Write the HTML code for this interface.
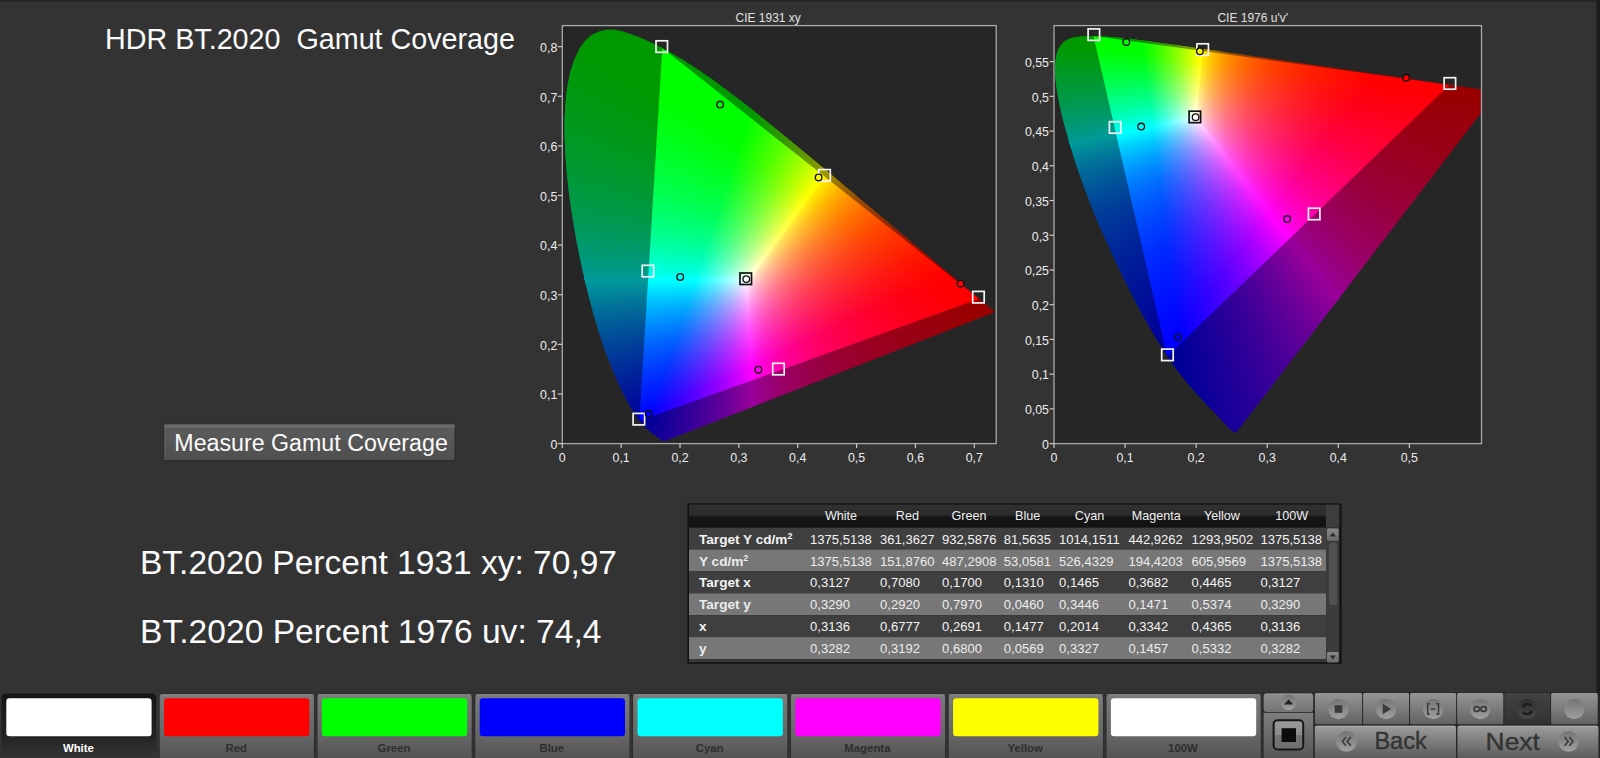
<!DOCTYPE html>
<html><head><meta charset="utf-8"><title>HDR BT.2020 Gamut Coverage</title>
<style>
html,body{margin:0;padding:0}
body{width:1600px;height:758px;background:#333;position:relative;overflow:hidden;font-family:"Liberation Sans",sans-serif}
.gam{position:absolute;overflow:hidden}
.ly{position:absolute;left:0;top:0;width:100%;height:100%}
.pb{position:absolute;background:#262626}
.pc{position:absolute;overflow:hidden}
#ov{position:absolute;left:0;top:0}
#ov text{font-family:"Liberation Sans",sans-serif;white-space:pre}
.topline{position:absolute;left:0;top:0;width:1600px;height:1.5px;background:#262626}
</style></head><body>

<div class="topline"></div>
<div class="pb" style="left:562.3px;top:25.6px;width:433.9px;height:418px"></div>
<div class="pb" style="left:1054px;top:25.6px;width:427.5px;height:418px"></div>
<div class="gam" style="left:562.3px;top:25.6px;width:433.9px;height:418px;clip-path:polygon(102.48px 415.52px,100.89px 415.47px,100.72px 415.39px,100.49px 415.27px,100.24px 415.12px,99.99px 414.97px,99.72px 414.79px,99.41px 414.58px,99.06px 414.33px,98.66px 414.05px,98.24px 413.73px,97.79px 413.39px,97.30px 413.00px,96.77px 412.59px,96.18px 412.15px,95.54px 411.68px,94.82px 411.15px,94.02px 410.56px,93.13px 409.92px,92.17px 409.22px,91.15px 408.47px,90.06px 407.66px,88.88px 406.74px,87.60px 405.71px,86.23px 404.58px,84.76px 403.26px,83.22px 401.83px,81.58px 400.23px,79.76px 398.20px,77.71px 395.73px,75.48px 392.83px,73.05px 389.32px,70.42px 385.24px,67.59px 380.55px,64.51px 374.93px,61.18px 368.37px,57.60px 360.87px,53.74px 352.15px,49.51px 342.20px,45.00px 331.03px,40.44px 318.41px,35.87px 304.21px,31.25px 288.56px,26.72px 271.62px,22.22px 253.16px,17.81px 233.41px,13.83px 213.22px,10.30px 192.55px,7.20px 171.44px,4.83px 150.85px,3.19px 130.87px,2.28px 111.40px,2.30px 93.09px,3.31px 75.92px,5.25px 59.91px,8.18px 45.75px,12.21px 33.56px,17.21px 23.22px,22.90px 15.09px,29.29px 9.47px,36.36px 6.06px,43.73px 4.27px,51.35px 4.21px,59.27px 5.78px,67.22px 8.04px,75.19px 10.86px,83.20px 14.37px,91.06px 18.11px,98.68px 21.93px,106.16px 25.97px,113.54px 30.17px,120.82px 34.53px,128.00px 39.05px,135.14px 43.72px,142.28px 48.54px,149.38px 53.52px,156.45px 58.60px,163.49px 63.80px,170.51px 69.10px,177.52px 74.48px,184.53px 79.94px,191.53px 85.47px,198.53px 91.05px,205.56px 96.70px,212.59px 102.40px,219.61px 108.12px,226.60px 113.88px,233.59px 119.66px,240.56px 125.44px,247.53px 131.22px,254.49px 137.00px,261.40px 142.76px,268.26px 148.50px,275.07px 154.21px,281.82px 159.88px,288.51px 165.49px,295.13px 171.06px,301.66px 176.55px,308.10px 181.96px,314.45px 187.30px,320.67px 192.53px,326.78px 197.64px,332.76px 202.65px,338.56px 207.51px,344.19px 212.25px,349.65px 216.86px,354.87px 221.26px,359.82px 225.42px,364.53px 229.37px,369.05px 233.17px,373.42px 236.83px,377.59px 240.33px,381.53px 243.64px,385.21px 246.71px,388.66px 249.57px,391.89px 252.27px,394.90px 254.80px,397.70px 257.16px,400.31px 259.36px,402.72px 261.40px,404.94px 263.28px,407.02px 265.02px,408.94px 266.63px,410.72px 268.11px,412.37px 269.49px,413.91px 270.78px,415.33px 271.98px,416.67px 273.11px,417.94px 274.18px,419.14px 275.19px,420.26px 276.14px,421.31px 277.02px,422.29px 277.85px,423.20px 278.62px,424.05px 279.32px,424.84px 279.96px,425.56px 280.55px,426.21px 281.09px,426.79px 281.59px,427.32px 282.04px,427.82px 282.46px,428.27px 282.84px,428.68px 283.18px,429.05px 283.50px,429.38px 283.78px,429.68px 284.03px,429.92px 284.23px,430.13px 284.41px,430.33px 284.57px,430.52px 284.73px,430.69px 284.88px,430.86px 285.02px,431.00px 285.14px,431.13px 285.25px,431.27px 285.37px,431.41px 285.48px,431.55px 285.60px,431.68px 285.71px,431.81px 285.82px,431.93px 285.92px,432.03px 286.01px,432.12px 286.09px,432.20px 286.15px,432.27px 286.21px,432.32px 286.25px,432.36px 286.28px,432.39px 286.31px,432.41px 286.33px,432.43px 286.35px,432.44px 286.36px)">
<div class="ly">
<div class="ly" style="background-image:conic-gradient(from 0deg at 88.29px 388.23px,#ffff00 0deg,#ffff00 35.5deg,#fffd00 35.75deg,#ffe300 37deg,#ffc900 38.5deg,#ffae00 40.25deg,#ff9400 42.25deg,#ff7b00 44.5deg,#ff6200 47.25deg,#ff4900 50.5deg,#ff3200 54.25deg,#ff1a00 58.75deg,#ff0300 64.25deg,#ff0000 65.25deg,#ff0000 125.25deg,#ff0000 185.25deg,#ff0000 245.25deg,#ff0000 305.25deg,#ff0000 360deg),conic-gradient(from 0deg at 176.58px 120.28px,#000000 0deg,#000000 60deg,#000000 120deg,#000000 124deg,#00001c 136deg,#000034 144.75deg,#00004a 151.5deg,#000061 157deg,#000077 161.5deg,#00008e 165.25deg,#0000a5 168.5deg,#0000bd 171.25deg,#0000d7 173.75deg,#0000f0 175.75deg,#0000fe 176.75deg,#0000ff 177.25deg,#0000ff 237.25deg,#0000ff 297.25deg,#0000ff 357.25deg,#0000ff 360deg);background-blend-mode:screen,normal;clip-path:polygon(181.17px 253.91px,702.90px -479.44px,901.18px -286.08px,1031.29px -41.57px,1080.88px 230.91px,1045.27px 505.58px,927.83px 756.41px,739.68px 959.65px,498.64px 1096.06px,227.53px 1152.72px)"></div>
<div class="ly" style="background-image:conic-gradient(from 0deg at 88.29px 388.23px,#00ff00 0deg,#00ff00 18.25deg,#25ff00 21.75deg,#49ff00 24.75deg,#6eff00 27.5deg,#94ff00 30deg,#bbff00 32.25deg,#e1ff00 34.25deg,#fcff00 35.5deg,#ffff00 35.75deg,#ffff00 95.75deg,#ffff00 155.75deg,#ffff00 215.75deg,#ffff00 245deg,#00ff00 245.25deg,#00ff00 305.25deg,#00ff00 360deg),conic-gradient(from 0deg at 376.70px 254.25px,#000000 0deg,#000000 60deg,#000000 120deg,#000000 180deg,#000000 240deg,#000000 245deg,#0000ff 245.25deg,#0000ff 269.75deg,#0000fd 270deg,#0000df 272deg,#0000c2 274.25deg,#0000a6 276.75deg,#000089 279.75deg,#00006d 283.25deg,#000051 287.25deg,#000036 292deg,#000019 297.75deg,#000000 303.75deg,#000000 360deg);background-blend-mode:screen,normal;clip-path:polygon(185.43px 257.42px,-714.55px 263.34px,-682.23px 18.32px,-584.49px -208.66px,-428.69px -400.50px,-226.59px -542.74px,6.59px -624.63px,253.24px -640.02px,494.78px -587.74px,713.00px -471.74px)"></div>
<div class="ly" style="background-image:conic-gradient(from 0deg at 176.58px 120.28px,#ff00ff 0deg,#ff00ff 60deg,#ff00ff 120deg,#ff00ff 176.75deg,#f900ff 177.25deg,#c500ff 181deg,#8f00ff 185.25deg,#5700ff 190deg,#1900ff 195.75deg,#0000ff 198.25deg,#0000ff 258.25deg,#0000ff 318.25deg,#0000ff 360deg),conic-gradient(from 0deg at 376.70px 254.25px,#000000 0deg,#000000 60deg,#000000 120deg,#000000 180deg,#000000 240deg,#000000 245deg,#001500 248deg,#003a00 252.75deg,#005e00 256.75deg,#008100 260.25deg,#00a600 263.5deg,#00c900 266.25deg,#00ee00 268.75deg,#00fd00 269.75deg,#00ff00 270deg,#00ff00 330deg,#00ff00 360deg);background-blend-mode:screen,normal;clip-path:polygon(186.11px 252.57px,239.66px 1150.97px,56.57px 1143.20px,-121.15px 1098.49px,-286.13px 1018.72px,-431.53px 907.18px,-551.32px 768.51px,-640.54px 608.44px,-695.49px 433.61px,-713.89px 251.29px)"></div>
</div>
<div class="ly" style="background:rgba(0,0,0,0.4);clip-path:polygon(evenodd,-50px -50px,483.9px -50px,483.9px 468px,-50px 468px,-50px -50px,416.73px 273.11px,100.06px 22.53px,77.11px 395.17px,416.73px 273.11px)"></div>
</div>
<div class="gam" style="left:1054px;top:25.6px;width:427.5px;height:418px;clip-path:polygon(182.51px 406.48px,179.24px 406.27px,178.79px 405.90px,178.13px 405.36px,177.40px 404.72px,176.66px 404.02px,175.85px 403.23px,174.92px 402.29px,173.84px 401.19px,172.63px 399.96px,171.32px 398.59px,169.93px 397.09px,168.43px 395.45px,166.79px 393.69px,165.04px 391.83px,163.16px 389.85px,161.07px 387.66px,158.75px 385.25px,156.24px 382.65px,153.55px 379.84px,150.73px 376.89px,147.75px 373.75px,144.51px 370.23px,141.05px 366.39px,137.37px 362.22px,133.41px 357.50px,129.31px 352.49px,124.99px 347.00px,120.08px 340.25px,114.62px 332.32px,108.75px 323.42px,102.39px 313.14px,95.72px 301.86px,88.80px 289.67px,81.51px 276.06px,74.01px 261.40px,66.46px 246.08px,58.86px 229.91px,51.26px 213.32px,43.90px 196.70px,37.05px 180.00px,30.77px 163.41px,25.05px 147.34px,20.01px 132.09px,15.53px 117.54px,11.62px 103.93px,8.45px 91.69px,5.91px 80.60px,3.89px 70.52px,2.47px 61.68px,1.55px 53.87px,1.06px 46.89px,1.02px 40.77px,1.42px 35.36px,2.18px 30.55px,3.30px 26.41px,4.81px 22.86px,6.66px 19.81px,8.73px 17.30px,11.07px 15.34px,13.68px 13.82px,16.43px 12.64px,19.33px 11.81px,22.42px 11.30px,25.59px 10.92px,28.84px 10.66px,32.20px 10.55px,35.58px 10.50px,38.93px 10.49px,42.30px 10.55px,45.72px 10.66px,49.19px 10.82px,52.70px 11.03px,56.30px 11.29px,60.01px 11.59px,63.81px 11.94px,67.71px 12.33px,71.72px 12.77px,75.84px 13.24px,80.10px 13.75px,84.49px 14.30px,89.02px 14.88px,93.71px 15.50px,98.57px 16.15px,103.61px 16.84px,108.81px 17.56px,114.18px 18.31px,119.75px 19.10px,125.50px 19.93px,131.46px 20.78px,137.62px 21.66px,143.98px 22.58px,150.55px 23.53px,157.32px 24.52px,164.29px 25.53px,171.47px 26.58px,178.87px 27.66px,186.45px 28.77px,194.23px 29.91px,202.20px 31.08px,210.34px 32.27px,218.63px 33.47px,227.08px 34.70px,235.62px 35.94px,244.24px 37.21px,252.94px 38.49px,261.58px 39.76px,270.07px 41.00px,278.44px 42.22px,286.75px 43.43px,295.05px 44.65px,303.26px 45.84px,311.25px 47.01px,318.92px 48.12px,326.31px 49.19px,333.44px 50.22px,340.29px 51.22px,346.82px 52.18px,353.05px 53.10px,358.95px 53.96px,364.49px 54.78px,369.75px 55.54px,374.70px 56.26px,379.33px 56.93px,383.72px 57.57px,387.88px 58.18px,391.78px 58.75px,395.51px 59.30px,399.09px 59.82px,402.49px 60.32px,405.72px 60.80px,408.78px 61.25px,411.66px 61.67px,414.36px 62.06px,416.88px 62.42px,419.20px 62.75px,421.35px 63.06px,423.32px 63.35px,425.11px 63.61px,426.77px 63.86px,428.31px 64.08px,429.71px 64.29px,430.99px 64.48px,432.17px 64.65px,433.22px 64.80px,434.15px 64.94px,434.93px 65.05px,435.59px 65.15px,436.21px 65.24px,436.82px 65.33px,437.38px 65.41px,437.91px 65.49px,438.37px 65.56px,438.80px 65.62px,439.23px 65.68px,439.68px 65.75px,440.13px 65.81px,440.56px 65.88px,440.97px 65.94px,441.36px 65.99px,441.71px 66.05px,442.00px 66.09px,442.26px 66.13px,442.47px 66.16px,442.63px 66.18px,442.75px 66.20px,442.85px 66.21px,442.94px 66.23px,443.00px 66.24px,443.05px 66.24px)">
<div class="ly">
<div class="ly" style="background-image:conic-gradient(from 0deg at 124.68px 308.34px,#ffff00 0deg,#ffff00 4deg,#fffe00 4.25deg,#ffe400 5.25deg,#ffce00 6.25deg,#ffb600 7.5deg,#ff9e00 9deg,#ff8700 10.75deg,#ff7100 12.75deg,#ff5e00 15deg,#ff4a00 17.75deg,#ff3700 21.25deg,#ff2400 25.5deg,#ff1200 30.75deg,#ff0000 37.5deg,#ff0000 97.5deg,#ff0000 157.5deg,#ff0000 217.5deg,#ff0000 277.5deg,#ff0000 337.5deg,#ff0000 352.5deg,#ffff00 352.75deg,#ffff00 360deg),conic-gradient(from 0deg at 88.84px 27.34px,#000000 0deg,#000000 60deg,#000000 96.75deg,#000023 106.75deg,#000043 114.5deg,#000060 120.75deg,#00007d 126deg,#00009a 130.5deg,#0000b6 134.25deg,#0000d3 137.5deg,#0000ef 140.25deg,#0000fd 141.5deg,#0000ff 141.75deg,#0000ff 201.75deg,#0000ff 261.75deg,#0000ff 321.75deg,#0000ff 352.5deg,#000000 352.75deg,#000000 360deg);background-blend-mode:screen,normal;clip-path:polygon(137.73px 93.63px,200.39px -804.18px,463.59px -745.30px,697.53px -611.08px,881.20px -413.57px,998.09px -170.51px,1037.73px 96.27px,996.53px 362.81px,878.21px 605.18px,693.40px 801.61px)"></div>
<div class="ly" style="background-image:conic-gradient(from 0deg at 124.68px 308.34px,#92ff00 0deg,#c3ff00 2deg,#f2ff00 3.75deg,#ffff00 4.25deg,#ffff00 64.25deg,#ffff00 124.25deg,#ffff00 184.25deg,#ffff00 217.5deg,#00ff00 217.75deg,#00ff00 277.75deg,#00ff00 337.75deg,#00ff00 352.75deg,#2eff00 355.25deg,#5bff00 357.5deg,#8cff00 359.75deg,#92ff00 360deg),conic-gradient(from 0deg at 320.32px 54.85px,#000000 0deg,#000000 60deg,#000000 120deg,#000000 180deg,#000000 217.5deg,#0000ff 217.75deg,#0000ff 258deg,#0000fc 258.25deg,#0000d1 260.75deg,#0000a5 263.5deg,#00007a 266.5deg,#00004d 270deg,#00001e 274deg,#000000 276.75deg,#000000 336.75deg,#000000 360deg);background-blend-mode:screen,normal;clip-path:polygon(142.86px 94.73px,-737.03px 283.95px,-756.95px 76.09px,-728.44px -130.77px,-653.02px -325.49px,-534.76px -497.59px,-380.03px -637.80px,-197.14px -738.58px,4.04px -794.50px,212.70px -802.56px)"></div>
<div class="ly" style="background-image:conic-gradient(from 0deg at 88.84px 27.34px,#ff00ff 0deg,#ff00ff 60deg,#ff00ff 120deg,#ff00ff 141.5deg,#fe00ff 141.75deg,#d700ff 145.25deg,#af00ff 149.25deg,#8700ff 153.75deg,#5d00ff 159deg,#3100ff 165.25deg,#0000ff 172.75deg,#0000ff 232.75deg,#0000ff 292.75deg,#0000ff 352.75deg,#0000ff 360deg),conic-gradient(from 0deg at 320.32px 54.85px,#000000 0deg,#000000 60deg,#000000 120deg,#000000 180deg,#000000 217.75deg,#001800 226deg,#002e00 232.5deg,#004500 237.75deg,#005b00 242deg,#007100 245.5deg,#008800 248.5deg,#00a200 251.25deg,#00bb00 253.5deg,#00d500 255.5deg,#00f000 257.25deg,#00fd00 258deg,#00ff00 258.25deg,#00ff00 318.25deg,#00ff00 360deg);background-blend-mode:screen,normal;clip-path:polygon(141.62px 89.93px,702.93px 793.44px,507.28px 912.30px,287.97px 977.95px,59.19px 986.15px,-164.25px 936.36px,-367.91px 831.81px,-538.60px 679.26px,-665.28px 488.58px,-739.75px 272.11px)"></div>
</div>
<div class="ly" style="background:rgba(0,0,0,0.4);clip-path:polygon(evenodd,-50px -50px,477.5px -50px,477.5px 468px,-50px 468px,-50px -50px,395.58px 59.28px,39.54px 10.47px,113.19px 330.61px,395.58px 59.28px)"></div>
</div>
<svg id="ov" width="1600" height="758" viewBox="0 0 1600 758"><defs>
<linearGradient id="gbtn" x1="0" y1="0" x2="0" y2="1"><stop offset="0" stop-color="#5c5c5c"/><stop offset="1" stop-color="#4f4f4f"/></linearGradient>
<linearGradient id="ghead" x1="0" y1="0" x2="0" y2="1"><stop offset="0" stop-color="#303030"/><stop offset="0.45" stop-color="#2c2c2c"/><stop offset="0.53" stop-color="#151515"/><stop offset="1" stop-color="#121212"/></linearGradient>
<linearGradient id="gsb" x1="0" y1="0" x2="0" y2="1"><stop offset="0" stop-color="#8a8a8a"/><stop offset="1" stop-color="#6a6a6a"/></linearGradient>
<linearGradient id="gsel" x1="0" y1="693" x2="0" y2="758" gradientUnits="userSpaceOnUse"><stop offset="0" stop-color="#161616"/><stop offset="0.6" stop-color="#202020"/><stop offset="1" stop-color="#343434"/></linearGradient>
<linearGradient id="gsw" x1="0" y1="694" x2="0" y2="758" gradientUnits="userSpaceOnUse"><stop offset="0" stop-color="#7c7c7c"/><stop offset="0.65" stop-color="#666"/><stop offset="1" stop-color="#545454"/></linearGradient>
<linearGradient id="gctl" x1="0" y1="0" x2="0" y2="1"><stop offset="0" stop-color="#959595"/><stop offset="1" stop-color="#626262"/></linearGradient>
<linearGradient id="gctl2" x1="0" y1="0" x2="0" y2="1"><stop offset="0" stop-color="#8e8e8e"/><stop offset="1" stop-color="#747474"/></linearGradient>
<linearGradient id="gctl3" x1="0" y1="713" x2="0" y2="758" gradientUnits="userSpaceOnUse"><stop offset="0" stop-color="#7e7e7e"/><stop offset="1" stop-color="#565656"/></linearGradient>
<linearGradient id="gctl4" x1="0" y1="726" x2="0" y2="758" gradientUnits="userSpaceOnUse"><stop offset="0" stop-color="#9c9c9c"/><stop offset="1" stop-color="#5c5c5c"/></linearGradient>
<linearGradient id="gdark" x1="0" y1="0" x2="0" y2="1"><stop offset="0" stop-color="#424242"/><stop offset="1" stop-color="#323232"/></linearGradient>
<linearGradient id="gcirc" x1="0" y1="0" x2="0" y2="1"><stop offset="0" stop-color="#747474"/><stop offset="1" stop-color="#a0a0a0"/></linearGradient>
<linearGradient id="gcircd" x1="0" y1="0" x2="0" y2="1"><stop offset="0" stop-color="#2e2e2e"/><stop offset="1" stop-color="#484848"/></linearGradient>
<linearGradient id="gcirc2" x1="0" y1="0" x2="0" y2="1"><stop offset="0" stop-color="#9a9a9a"/><stop offset="0.5" stop-color="#8c8c8c"/><stop offset="0.5" stop-color="#747474"/><stop offset="1" stop-color="#6e6e6e"/></linearGradient>
<clipPath id="clipxy"><rect x="554.3" y="17.6" width="449.9" height="434"/></clipPath>
<clipPath id="clipuv"><rect x="1046" y="17.6" width="436.1" height="434"/></clipPath>
</defs>
<text x="105" y="49" font-size="28.8" fill="#fbfbfb" text-anchor="start" font-weight="normal" textLength="410" lengthAdjust="spacingAndGlyphs">HDR BT.2020&#160; Gamut Coverage</text>
<text x="140" y="573.6" font-size="33.5" fill="#fbfbfb" text-anchor="start" font-weight="normal" textLength="477" lengthAdjust="spacingAndGlyphs">BT.2020 Percent 1931 xy: 70,97</text>
<text x="140" y="643" font-size="33.5" fill="#fbfbfb" text-anchor="start" font-weight="normal" textLength="461.5" lengthAdjust="spacingAndGlyphs">BT.2020 Percent 1976 uv: 74,4</text>
<rect x="163.5" y="423.5" width="292" height="37.5" rx="1.5" fill="#2a2a2a"/>
<rect x="164.5" y="424.5" width="290" height="35.5" fill="url(#gbtn)"/>
<rect x="164.5" y="424.5" width="290" height="3.2" fill="#6c6c6c"/>
<rect x="164.5" y="424.5" width="1" height="35.5" fill="#666"/>
<text x="174.3" y="451" font-size="23.3" fill="#fbfbfb" text-anchor="start" font-weight="normal" textLength="273.5" lengthAdjust="spacingAndGlyphs">Measure Gamut Coverage</text>
<rect x="562.3" y="25.6" width="433.9" height="418" fill="none" stroke="#a9a9a9" stroke-width="1.3"/>
<text x="768.2" y="21.6" font-size="12" fill="#e0e0e0" text-anchor="middle" font-weight="normal">CIE 1931 xy</text>
<line x1="562.3" y1="443.6" x2="562.3" y2="448.1" stroke="#c8c8c8" stroke-width="1.2"/>
<text x="562.3" y="461.7" font-size="12.4" fill="#ececec" text-anchor="middle" font-weight="normal">0</text>
<line x1="621.16" y1="443.6" x2="621.16" y2="448.1" stroke="#c8c8c8" stroke-width="1.2"/>
<text x="621.16" y="461.7" font-size="12.4" fill="#ececec" text-anchor="middle" font-weight="normal">0,1</text>
<line x1="680.02" y1="443.6" x2="680.02" y2="448.1" stroke="#c8c8c8" stroke-width="1.2"/>
<text x="680.02" y="461.7" font-size="12.4" fill="#ececec" text-anchor="middle" font-weight="normal">0,2</text>
<line x1="738.88" y1="443.6" x2="738.88" y2="448.1" stroke="#c8c8c8" stroke-width="1.2"/>
<text x="738.88" y="461.7" font-size="12.4" fill="#ececec" text-anchor="middle" font-weight="normal">0,3</text>
<line x1="797.74" y1="443.6" x2="797.74" y2="448.1" stroke="#c8c8c8" stroke-width="1.2"/>
<text x="797.74" y="461.7" font-size="12.4" fill="#ececec" text-anchor="middle" font-weight="normal">0,4</text>
<line x1="856.6" y1="443.6" x2="856.6" y2="448.1" stroke="#c8c8c8" stroke-width="1.2"/>
<text x="856.6" y="461.7" font-size="12.4" fill="#ececec" text-anchor="middle" font-weight="normal">0,5</text>
<line x1="915.46" y1="443.6" x2="915.46" y2="448.1" stroke="#c8c8c8" stroke-width="1.2"/>
<text x="915.46" y="461.7" font-size="12.4" fill="#ececec" text-anchor="middle" font-weight="normal">0,6</text>
<line x1="974.32" y1="443.6" x2="974.32" y2="448.1" stroke="#c8c8c8" stroke-width="1.2"/>
<text x="974.32" y="461.7" font-size="12.4" fill="#ececec" text-anchor="middle" font-weight="normal">0,7</text>
<line x1="557.8" y1="443.6" x2="562.3" y2="443.6" stroke="#c8c8c8" stroke-width="1.2"/>
<text x="557.3" y="448.9" font-size="12.4" fill="#ececec" text-anchor="end" font-weight="normal">0</text>
<line x1="557.8" y1="393.98" x2="562.3" y2="393.98" stroke="#c8c8c8" stroke-width="1.2"/>
<text x="557.3" y="399.28" font-size="12.4" fill="#ececec" text-anchor="end" font-weight="normal">0,1</text>
<line x1="557.8" y1="344.36" x2="562.3" y2="344.36" stroke="#c8c8c8" stroke-width="1.2"/>
<text x="557.3" y="349.66" font-size="12.4" fill="#ececec" text-anchor="end" font-weight="normal">0,2</text>
<line x1="557.8" y1="294.74" x2="562.3" y2="294.74" stroke="#c8c8c8" stroke-width="1.2"/>
<text x="557.3" y="300.04" font-size="12.4" fill="#ececec" text-anchor="end" font-weight="normal">0,3</text>
<line x1="557.8" y1="245.12" x2="562.3" y2="245.12" stroke="#c8c8c8" stroke-width="1.2"/>
<text x="557.3" y="250.42" font-size="12.4" fill="#ececec" text-anchor="end" font-weight="normal">0,4</text>
<line x1="557.8" y1="195.5" x2="562.3" y2="195.5" stroke="#c8c8c8" stroke-width="1.2"/>
<text x="557.3" y="200.8" font-size="12.4" fill="#ececec" text-anchor="end" font-weight="normal">0,5</text>
<line x1="557.8" y1="145.88" x2="562.3" y2="145.88" stroke="#c8c8c8" stroke-width="1.2"/>
<text x="557.3" y="151.18" font-size="12.4" fill="#ececec" text-anchor="end" font-weight="normal">0,6</text>
<line x1="557.8" y1="96.26" x2="562.3" y2="96.26" stroke="#c8c8c8" stroke-width="1.2"/>
<text x="557.3" y="101.56" font-size="12.4" fill="#ececec" text-anchor="end" font-weight="normal">0,7</text>
<line x1="557.8" y1="46.64" x2="562.3" y2="46.64" stroke="#c8c8c8" stroke-width="1.2"/>
<text x="557.3" y="51.94" font-size="12.4" fill="#ececec" text-anchor="end" font-weight="normal">0,8</text>
<rect x="1054" y="25.6" width="427.5" height="418" fill="none" stroke="#a9a9a9" stroke-width="1.3"/>
<text x="1252.7" y="21.6" font-size="12" fill="#e0e0e0" text-anchor="middle" font-weight="normal">CIE 1976 u'v'</text>
<line x1="1054" y1="443.6" x2="1054" y2="448.1" stroke="#c8c8c8" stroke-width="1.2"/>
<text x="1054" y="461.7" font-size="12.4" fill="#ececec" text-anchor="middle" font-weight="normal">0</text>
<line x1="1125.07" y1="443.6" x2="1125.07" y2="448.1" stroke="#c8c8c8" stroke-width="1.2"/>
<text x="1125.07" y="461.7" font-size="12.4" fill="#ececec" text-anchor="middle" font-weight="normal">0,1</text>
<line x1="1196.14" y1="443.6" x2="1196.14" y2="448.1" stroke="#c8c8c8" stroke-width="1.2"/>
<text x="1196.14" y="461.7" font-size="12.4" fill="#ececec" text-anchor="middle" font-weight="normal">0,2</text>
<line x1="1267.21" y1="443.6" x2="1267.21" y2="448.1" stroke="#c8c8c8" stroke-width="1.2"/>
<text x="1267.21" y="461.7" font-size="12.4" fill="#ececec" text-anchor="middle" font-weight="normal">0,3</text>
<line x1="1338.28" y1="443.6" x2="1338.28" y2="448.1" stroke="#c8c8c8" stroke-width="1.2"/>
<text x="1338.28" y="461.7" font-size="12.4" fill="#ececec" text-anchor="middle" font-weight="normal">0,4</text>
<line x1="1409.35" y1="443.6" x2="1409.35" y2="448.1" stroke="#c8c8c8" stroke-width="1.2"/>
<text x="1409.35" y="461.7" font-size="12.4" fill="#ececec" text-anchor="middle" font-weight="normal">0,5</text>
<line x1="1049.5" y1="443.6" x2="1054" y2="443.6" stroke="#c8c8c8" stroke-width="1.2"/>
<text x="1049" y="448.9" font-size="12.4" fill="#ececec" text-anchor="end" font-weight="normal">0</text>
<line x1="1049.5" y1="408.875" x2="1054" y2="408.875" stroke="#c8c8c8" stroke-width="1.2"/>
<text x="1049" y="414.175" font-size="12.4" fill="#ececec" text-anchor="end" font-weight="normal">0,05</text>
<line x1="1049.5" y1="374.15" x2="1054" y2="374.15" stroke="#c8c8c8" stroke-width="1.2"/>
<text x="1049" y="379.45" font-size="12.4" fill="#ececec" text-anchor="end" font-weight="normal">0,1</text>
<line x1="1049.5" y1="339.425" x2="1054" y2="339.425" stroke="#c8c8c8" stroke-width="1.2"/>
<text x="1049" y="344.725" font-size="12.4" fill="#ececec" text-anchor="end" font-weight="normal">0,15</text>
<line x1="1049.5" y1="304.7" x2="1054" y2="304.7" stroke="#c8c8c8" stroke-width="1.2"/>
<text x="1049" y="310" font-size="12.4" fill="#ececec" text-anchor="end" font-weight="normal">0,2</text>
<line x1="1049.5" y1="269.975" x2="1054" y2="269.975" stroke="#c8c8c8" stroke-width="1.2"/>
<text x="1049" y="275.275" font-size="12.4" fill="#ececec" text-anchor="end" font-weight="normal">0,25</text>
<line x1="1049.5" y1="235.25" x2="1054" y2="235.25" stroke="#c8c8c8" stroke-width="1.2"/>
<text x="1049" y="240.55" font-size="12.4" fill="#ececec" text-anchor="end" font-weight="normal">0,3</text>
<line x1="1049.5" y1="200.525" x2="1054" y2="200.525" stroke="#c8c8c8" stroke-width="1.2"/>
<text x="1049" y="205.825" font-size="12.4" fill="#ececec" text-anchor="end" font-weight="normal">0,35</text>
<line x1="1049.5" y1="165.8" x2="1054" y2="165.8" stroke="#c8c8c8" stroke-width="1.2"/>
<text x="1049" y="171.1" font-size="12.4" fill="#ececec" text-anchor="end" font-weight="normal">0,4</text>
<line x1="1049.5" y1="131.075" x2="1054" y2="131.075" stroke="#c8c8c8" stroke-width="1.2"/>
<text x="1049" y="136.375" font-size="12.4" fill="#ececec" text-anchor="end" font-weight="normal">0,45</text>
<line x1="1049.5" y1="96.35" x2="1054" y2="96.35" stroke="#c8c8c8" stroke-width="1.2"/>
<text x="1049" y="101.65" font-size="12.4" fill="#ececec" text-anchor="end" font-weight="normal">0,5</text>
<line x1="1049.5" y1="61.625" x2="1054" y2="61.625" stroke="#c8c8c8" stroke-width="1.2"/>
<text x="1049" y="66.925" font-size="12.4" fill="#ececec" text-anchor="end" font-weight="normal">0,55</text>
<g clip-path="url(#clipxy)">
<rect x="740.0" y="273.0" width="11.5" height="11.5" fill="none" stroke="#111" stroke-width="1.7"/>
<rect x="972.7" y="291.4" width="11.5" height="11.5" fill="none" stroke="#f4f4f4" stroke-width="1.7"/>
<rect x="656.0" y="40.8" width="11.5" height="11.5" fill="none" stroke="#f4f4f4" stroke-width="1.7"/>
<rect x="633.1" y="413.4" width="11.5" height="11.5" fill="none" stroke="#f4f4f4" stroke-width="1.7"/>
<rect x="642.2" y="265.3" width="11.5" height="11.5" fill="none" stroke="#f4f4f4" stroke-width="1.7"/>
<rect x="772.7" y="363.3" width="11.5" height="11.5" fill="none" stroke="#f4f4f4" stroke-width="1.7"/>
<rect x="818.8" y="169.6" width="11.5" height="11.5" fill="none" stroke="#f4f4f4" stroke-width="1.7"/>
<circle cx="746.3" cy="279.1" r="3.3" fill="#ffffff" stroke="#121212" stroke-width="1.35"/>
<circle cx="960.6" cy="283.6" r="3.3" fill="#ff0000" stroke="#121212" stroke-width="1.35"/>
<circle cx="720.1" cy="104.6" r="3.3" fill="#00ff00" stroke="#121212" stroke-width="1.35"/>
<circle cx="648.6" cy="413.8" r="3.3" fill="#0000ff" stroke="#121212" stroke-width="1.35"/>
<circle cx="680.2" cy="276.9" r="3.3" fill="#00ffff" stroke="#121212" stroke-width="1.35"/>
<circle cx="758.4" cy="369.7" r="3.3" fill="#ff00ff" stroke="#121212" stroke-width="1.35"/>
<circle cx="818.6" cy="177.4" r="3.3" fill="#ffff00" stroke="#121212" stroke-width="1.35"/>
</g>
<g clip-path="url(#clipuv)">
<rect x="1189.1" y="111.2" width="11.5" height="11.5" fill="none" stroke="#111" stroke-width="1.7"/>
<rect x="1444.1" y="77.7" width="11.5" height="11.5" fill="none" stroke="#f4f4f4" stroke-width="1.7"/>
<rect x="1088.1" y="28.9" width="11.5" height="11.5" fill="none" stroke="#f4f4f4" stroke-width="1.7"/>
<rect x="1161.7" y="349.1" width="11.5" height="11.5" fill="none" stroke="#f4f4f4" stroke-width="1.7"/>
<rect x="1109.4" y="121.7" width="11.5" height="11.5" fill="none" stroke="#f4f4f4" stroke-width="1.7"/>
<rect x="1308.4" y="208.2" width="11.5" height="11.5" fill="none" stroke="#f4f4f4" stroke-width="1.7"/>
<rect x="1196.9" y="43.8" width="11.5" height="11.5" fill="none" stroke="#f4f4f4" stroke-width="1.7"/>
<circle cx="1195.6" cy="117.2" r="3.3" fill="#ffffff" stroke="#121212" stroke-width="1.35"/>
<circle cx="1406.2" cy="77.8" r="3.3" fill="#ff0000" stroke="#121212" stroke-width="1.35"/>
<circle cx="1126.3" cy="42.0" r="3.3" fill="#00ff00" stroke="#121212" stroke-width="1.35"/>
<circle cx="1178.3" cy="337.2" r="3.3" fill="#0000ff" stroke="#121212" stroke-width="1.35"/>
<circle cx="1141.2" cy="126.6" r="3.3" fill="#00ffff" stroke="#121212" stroke-width="1.35"/>
<circle cx="1287.2" cy="219.0" r="3.3" fill="#ff00ff" stroke="#121212" stroke-width="1.35"/>
<circle cx="1199.9" cy="51.3" r="3.3" fill="#ffff00" stroke="#121212" stroke-width="1.35"/>
</g>
<rect x="687.4" y="503.4" width="654.2" height="160.4" fill="#121212"/>
<rect x="689" y="504.6" width="637" height="23" fill="url(#ghead)"/>
<rect x="1326" y="504.6" width="13.4" height="23" fill="#3d3d3d"/>
<rect x="689" y="527.6" width="637" height="21.9" fill="#3f3f3f"/>
<rect x="689" y="549.5" width="637" height="21.9" fill="#777777"/>
<rect x="689" y="571.4" width="637" height="21.9" fill="#3f3f3f"/>
<rect x="689" y="593.3" width="637" height="21.9" fill="#777777"/>
<rect x="689" y="615.2" width="637" height="21.9" fill="#3f3f3f"/>
<rect x="689" y="637.1" width="637" height="22.1" fill="#777777"/>
<rect x="689" y="659.2" width="637" height="3" fill="#3a3a3a"/>
<rect x="1326" y="527.6" width="13.4" height="134.6" fill="#3b3b3b"/>
<rect x="1327" y="528.4" width="11.6" height="12.4" rx="1.5" fill="url(#gsb)"/>
<path d="M1329.6 536.6 L1332.8 532.6 L1336 536.6 Z" fill="#2c2c2c"/>
<rect x="1328.8" y="542.6" width="8.4" height="62.6" rx="3.5" fill="#505050"/>
<rect x="1327" y="652" width="11.6" height="10.6" rx="1.5" fill="url(#gsb)"/>
<path d="M1329.6 655.6 L1336 655.6 L1332.8 659.6 Z" fill="#2c2c2c"/>
<text x="841" y="519.6" font-size="12.6" fill="#f0f0f0" text-anchor="middle" font-weight="normal">White</text>
<text x="907.4" y="519.6" font-size="12.6" fill="#f0f0f0" text-anchor="middle" font-weight="normal">Red</text>
<text x="969" y="519.6" font-size="12.6" fill="#f0f0f0" text-anchor="middle" font-weight="normal">Green</text>
<text x="1027.6" y="519.6" font-size="12.6" fill="#f0f0f0" text-anchor="middle" font-weight="normal">Blue</text>
<text x="1089.5" y="519.6" font-size="12.6" fill="#f0f0f0" text-anchor="middle" font-weight="normal">Cyan</text>
<text x="1156.3" y="519.6" font-size="12.6" fill="#f0f0f0" text-anchor="middle" font-weight="normal">Magenta</text>
<text x="1222" y="519.6" font-size="12.6" fill="#f0f0f0" text-anchor="middle" font-weight="normal">Yellow</text>
<text x="1291.8" y="519.6" font-size="12.6" fill="#f0f0f0" text-anchor="middle" font-weight="normal">100W</text>
<text x="699" y="543.6" font-size="13.6" fill="#f4f4f4" text-anchor="start" font-weight="bold">Target Y cd/m<tspan font-size="9" dy="-5">2</tspan></text>
<text x="810" y="543.6" font-size="13.05" fill="#f4f4f4" text-anchor="start" font-weight="normal">1375,5138</text>
<text x="880" y="543.6" font-size="13.05" fill="#f4f4f4" text-anchor="start" font-weight="normal">361,3627</text>
<text x="942" y="543.6" font-size="13.05" fill="#f4f4f4" text-anchor="start" font-weight="normal">932,5876</text>
<text x="1003.8" y="543.6" font-size="13.05" fill="#f4f4f4" text-anchor="start" font-weight="normal">81,5635</text>
<text x="1059" y="543.6" font-size="13.05" fill="#f4f4f4" text-anchor="start" font-weight="normal">1014,1511</text>
<text x="1128.4" y="543.6" font-size="13.05" fill="#f4f4f4" text-anchor="start" font-weight="normal">442,9262</text>
<text x="1191.6" y="543.6" font-size="13.05" fill="#f4f4f4" text-anchor="start" font-weight="normal">1293,9502</text>
<text x="1260.4" y="543.6" font-size="13.05" fill="#f4f4f4" text-anchor="start" font-weight="normal">1375,5138</text>
<text x="699" y="565.5" font-size="13.6" fill="#ececec" text-anchor="start" font-weight="bold">Y cd/m<tspan font-size="9" dy="-5">2</tspan></text>
<text x="810" y="565.5" font-size="13.05" fill="#ececec" text-anchor="start" font-weight="normal">1375,5138</text>
<text x="880" y="565.5" font-size="13.05" fill="#ececec" text-anchor="start" font-weight="normal">151,8760</text>
<text x="942" y="565.5" font-size="13.05" fill="#ececec" text-anchor="start" font-weight="normal">487,2908</text>
<text x="1003.8" y="565.5" font-size="13.05" fill="#ececec" text-anchor="start" font-weight="normal">53,0581</text>
<text x="1059" y="565.5" font-size="13.05" fill="#ececec" text-anchor="start" font-weight="normal">526,4329</text>
<text x="1128.4" y="565.5" font-size="13.05" fill="#ececec" text-anchor="start" font-weight="normal">194,4203</text>
<text x="1191.6" y="565.5" font-size="13.05" fill="#ececec" text-anchor="start" font-weight="normal">605,9569</text>
<text x="1260.4" y="565.5" font-size="13.05" fill="#ececec" text-anchor="start" font-weight="normal">1375,5138</text>
<text x="699" y="587.4" font-size="13.6" fill="#f4f4f4" text-anchor="start" font-weight="bold">Target x</text>
<text x="810" y="587.4" font-size="13.05" fill="#f4f4f4" text-anchor="start" font-weight="normal">0,3127</text>
<text x="880" y="587.4" font-size="13.05" fill="#f4f4f4" text-anchor="start" font-weight="normal">0,7080</text>
<text x="942" y="587.4" font-size="13.05" fill="#f4f4f4" text-anchor="start" font-weight="normal">0,1700</text>
<text x="1003.8" y="587.4" font-size="13.05" fill="#f4f4f4" text-anchor="start" font-weight="normal">0,1310</text>
<text x="1059" y="587.4" font-size="13.05" fill="#f4f4f4" text-anchor="start" font-weight="normal">0,1465</text>
<text x="1128.4" y="587.4" font-size="13.05" fill="#f4f4f4" text-anchor="start" font-weight="normal">0,3682</text>
<text x="1191.6" y="587.4" font-size="13.05" fill="#f4f4f4" text-anchor="start" font-weight="normal">0,4465</text>
<text x="1260.4" y="587.4" font-size="13.05" fill="#f4f4f4" text-anchor="start" font-weight="normal">0,3127</text>
<text x="699" y="609.3" font-size="13.6" fill="#ececec" text-anchor="start" font-weight="bold">Target y</text>
<text x="810" y="609.3" font-size="13.05" fill="#ececec" text-anchor="start" font-weight="normal">0,3290</text>
<text x="880" y="609.3" font-size="13.05" fill="#ececec" text-anchor="start" font-weight="normal">0,2920</text>
<text x="942" y="609.3" font-size="13.05" fill="#ececec" text-anchor="start" font-weight="normal">0,7970</text>
<text x="1003.8" y="609.3" font-size="13.05" fill="#ececec" text-anchor="start" font-weight="normal">0,0460</text>
<text x="1059" y="609.3" font-size="13.05" fill="#ececec" text-anchor="start" font-weight="normal">0,3446</text>
<text x="1128.4" y="609.3" font-size="13.05" fill="#ececec" text-anchor="start" font-weight="normal">0,1471</text>
<text x="1191.6" y="609.3" font-size="13.05" fill="#ececec" text-anchor="start" font-weight="normal">0,5374</text>
<text x="1260.4" y="609.3" font-size="13.05" fill="#ececec" text-anchor="start" font-weight="normal">0,3290</text>
<text x="699" y="631.2" font-size="13.6" fill="#f4f4f4" text-anchor="start" font-weight="bold">x</text>
<text x="810" y="631.2" font-size="13.05" fill="#f4f4f4" text-anchor="start" font-weight="normal">0,3136</text>
<text x="880" y="631.2" font-size="13.05" fill="#f4f4f4" text-anchor="start" font-weight="normal">0,6777</text>
<text x="942" y="631.2" font-size="13.05" fill="#f4f4f4" text-anchor="start" font-weight="normal">0,2691</text>
<text x="1003.8" y="631.2" font-size="13.05" fill="#f4f4f4" text-anchor="start" font-weight="normal">0,1477</text>
<text x="1059" y="631.2" font-size="13.05" fill="#f4f4f4" text-anchor="start" font-weight="normal">0,2014</text>
<text x="1128.4" y="631.2" font-size="13.05" fill="#f4f4f4" text-anchor="start" font-weight="normal">0,3342</text>
<text x="1191.6" y="631.2" font-size="13.05" fill="#f4f4f4" text-anchor="start" font-weight="normal">0,4365</text>
<text x="1260.4" y="631.2" font-size="13.05" fill="#f4f4f4" text-anchor="start" font-weight="normal">0,3136</text>
<text x="699" y="653.1" font-size="13.6" fill="#ececec" text-anchor="start" font-weight="bold">y</text>
<text x="810" y="653.1" font-size="13.05" fill="#ececec" text-anchor="start" font-weight="normal">0,3282</text>
<text x="880" y="653.1" font-size="13.05" fill="#ececec" text-anchor="start" font-weight="normal">0,3192</text>
<text x="942" y="653.1" font-size="13.05" fill="#ececec" text-anchor="start" font-weight="normal">0,6800</text>
<text x="1003.8" y="653.1" font-size="13.05" fill="#ececec" text-anchor="start" font-weight="normal">0,0569</text>
<text x="1059" y="653.1" font-size="13.05" fill="#ececec" text-anchor="start" font-weight="normal">0,3327</text>
<text x="1128.4" y="653.1" font-size="13.05" fill="#ececec" text-anchor="start" font-weight="normal">0,1457</text>
<text x="1191.6" y="653.1" font-size="13.05" fill="#ececec" text-anchor="start" font-weight="normal">0,5332</text>
<text x="1260.4" y="653.1" font-size="13.05" fill="#ececec" text-anchor="start" font-weight="normal">0,3282</text>
<rect x="1595.6" y="0" width="1" height="758" fill="#2a2a2a"/><rect x="1596.6" y="0" width="3.4" height="758" fill="#1c1c1c"/>
<rect x="1.5" y="693.6" width="154.6" height="70" rx="4" fill="url(#gsel)"/>
<rect x="6.3" y="698.2" width="145.3" height="38" rx="3.2" fill="#ffffff"/>
<text x="78.4" y="752.2" font-size="11.4" fill="#ffffff" text-anchor="middle" font-weight="bold">White</text>
<rect x="158.9" y="693.4" width="155.6" height="70" rx="4" fill="#2b2b2b"/>
<rect x="159.7" y="694.2" width="154.2" height="70" rx="3.5" fill="url(#gsw)"/>
<rect x="159.7" y="694.2" width="154.2" height="1.4" rx="0.7" fill="#8c8c8c" opacity="0.8"/>
<rect x="164.1" y="698.2" width="145.3" height="38" rx="3.2" fill="#ff0000"/>
<text x="236.2" y="752.2" font-size="11.4" fill="#2e2e2e" text-anchor="middle" font-weight="bold">Red</text>
<rect x="316.7" y="693.4" width="155.6" height="70" rx="4" fill="#2b2b2b"/>
<rect x="317.5" y="694.2" width="154.2" height="70" rx="3.5" fill="url(#gsw)"/>
<rect x="317.5" y="694.2" width="154.2" height="1.4" rx="0.7" fill="#8c8c8c" opacity="0.8"/>
<rect x="321.9" y="698.2" width="145.3" height="38" rx="3.2" fill="#00ff00"/>
<text x="394" y="752.2" font-size="11.4" fill="#2e2e2e" text-anchor="middle" font-weight="bold">Green</text>
<rect x="474.5" y="693.4" width="155.6" height="70" rx="4" fill="#2b2b2b"/>
<rect x="475.3" y="694.2" width="154.2" height="70" rx="3.5" fill="url(#gsw)"/>
<rect x="475.3" y="694.2" width="154.2" height="1.4" rx="0.7" fill="#8c8c8c" opacity="0.8"/>
<rect x="479.7" y="698.2" width="145.3" height="38" rx="3.2" fill="#0000ff"/>
<text x="551.8" y="752.2" font-size="11.4" fill="#2e2e2e" text-anchor="middle" font-weight="bold">Blue</text>
<rect x="632.3" y="693.4" width="155.6" height="70" rx="4" fill="#2b2b2b"/>
<rect x="633.1" y="694.2" width="154.2" height="70" rx="3.5" fill="url(#gsw)"/>
<rect x="633.1" y="694.2" width="154.2" height="1.4" rx="0.7" fill="#8c8c8c" opacity="0.8"/>
<rect x="637.5" y="698.2" width="145.3" height="38" rx="3.2" fill="#00ffff"/>
<text x="709.6" y="752.2" font-size="11.4" fill="#2e2e2e" text-anchor="middle" font-weight="bold">Cyan</text>
<rect x="790.1" y="693.4" width="155.6" height="70" rx="4" fill="#2b2b2b"/>
<rect x="790.9" y="694.2" width="154.2" height="70" rx="3.5" fill="url(#gsw)"/>
<rect x="790.9" y="694.2" width="154.2" height="1.4" rx="0.7" fill="#8c8c8c" opacity="0.8"/>
<rect x="795.3" y="698.2" width="145.3" height="38" rx="3.2" fill="#ff00ff"/>
<text x="867.4" y="752.2" font-size="11.4" fill="#2e2e2e" text-anchor="middle" font-weight="bold">Magenta</text>
<rect x="947.9" y="693.4" width="155.6" height="70" rx="4" fill="#2b2b2b"/>
<rect x="948.7" y="694.2" width="154.2" height="70" rx="3.5" fill="url(#gsw)"/>
<rect x="948.7" y="694.2" width="154.2" height="1.4" rx="0.7" fill="#8c8c8c" opacity="0.8"/>
<rect x="953.1" y="698.2" width="145.3" height="38" rx="3.2" fill="#ffff00"/>
<text x="1025.2" y="752.2" font-size="11.4" fill="#2e2e2e" text-anchor="middle" font-weight="bold">Yellow</text>
<rect x="1105.7" y="693.4" width="155.6" height="70" rx="4" fill="#2b2b2b"/>
<rect x="1106.5" y="694.2" width="154.2" height="70" rx="3.5" fill="url(#gsw)"/>
<rect x="1106.5" y="694.2" width="154.2" height="1.4" rx="0.7" fill="#8c8c8c" opacity="0.8"/>
<rect x="1110.9" y="698.2" width="145.3" height="38" rx="3.2" fill="#ffffff"/>
<text x="1183" y="752.2" font-size="11.4" fill="#2e2e2e" text-anchor="middle" font-weight="bold">100W</text>
<rect x="1262.6" y="692.4" width="338" height="70" fill="#262626"/>
<rect x="1263.6" y="693.2" width="49.6" height="18.8" rx="3" fill="url(#gctl2)"/>
<rect x="1263.6" y="712.8" width="49.6" height="50" rx="0" fill="url(#gctl3)"/>
<circle cx="1288.6" cy="702.4" r="7.6" fill="url(#gcirc)"/>
<path d="M1283.8 704.6 L1288.6 699.4 L1293.4 704.6 Z" fill="#222"/>
<rect x="1273.6" y="720.2" width="29.6" height="29.2" rx="4" fill="url(#gcirc2)" stroke="#161616" stroke-width="2"/>
<rect x="1281.6" y="728.2" width="14.4" height="13.8" fill="#0c0c0c"/>
<rect x="1314.9" y="693" width="47.2" height="31.2" rx="1.5" fill="url(#gctl)"/>
<circle cx="1338.5" cy="709" r="10.2" fill="url(#gcirc)"/>
<rect x="1334.7" y="705.2" width="7.6" height="7.6" fill="#3a3a3a"/>
<rect x="1363.1" y="693" width="46" height="31.2" rx="1.5" fill="url(#gctl)"/>
<circle cx="1386.1" cy="709" r="10.2" fill="url(#gcirc)"/>
<path d="M1382.7 703.8 L1391.1 709 L1382.7 714.2 Z" fill="#3a3a3a"/>
<rect x="1410.1" y="693" width="46" height="31.2" rx="1.5" fill="url(#gctl)"/>
<circle cx="1433.1" cy="709" r="10.2" fill="url(#gcirc)"/>
<path d="M1429.9 703.8 h-2.2 v10.4 h2.2 M1436.3 703.8 h2.2 v10.4 h-2.2 M1430.9 709 h4.4" fill="none" stroke="#3a3a3a" stroke-width="1.5"/>
<rect x="1457.1" y="693" width="46.2" height="31.2" rx="1.5" fill="url(#gctl)"/>
<circle cx="1480.2" cy="709" r="10.2" fill="url(#gcirc)"/>
<path d="M1480.2 709 c-1.6 -3.2 -6.2 -3.2 -6.2 0 c0 3.2 4.6 3.2 6.2 0 c1.6 -3.2 6.2 -3.2 6.2 0 c0 3.2 -4.6 3.2 -6.2 0 Z" fill="none" stroke="#3a3a3a" stroke-width="1.7"/>
<rect x="1504.3" y="693" width="45.8" height="31.2" rx="1.5" fill="url(#gdark)"/>
<circle cx="1527.2" cy="709" r="10.2" fill="url(#gcircd)"/>
<path d="M1522.8 707.6 a4.6 4.6 0 0 1 8.4 -1.6 M1531.6 710.4 a4.6 4.6 0 0 1 -8.4 1.6" fill="none" stroke="#1c1c1c" stroke-width="2.4"/>
<rect x="1551.1" y="693" width="46.6" height="31.2" rx="1.5" fill="url(#gctl)"/>
<circle cx="1574.4" cy="709" r="10.2" fill="url(#gcirc)"/>
<rect x="1314.8" y="725.8" width="141.2" height="40" rx="2" fill="url(#gctl4)"/>
<rect x="1457.4" y="725.8" width="141" height="40" rx="2" fill="url(#gctl4)"/>
<rect x="1315.4" y="725.8" width="140" height="1.3" fill="#b0b0b0" opacity="0.7"/>
<rect x="1458" y="725.8" width="140" height="1.3" fill="#b0b0b0" opacity="0.7"/>
<circle cx="1346.6" cy="741.4" r="10.4" fill="url(#gcirc)"/>
<circle cx="1568.6" cy="741.4" r="10.4" fill="url(#gcirc)"/>
<path d="M1346 737 l-3.6 4.4 l3.6 4.4 M1350.8 737 l-3.6 4.4 l3.6 4.4" fill="none" stroke="#3a3a3a" stroke-width="1.6"/>
<path d="M1564.6 737 l3.6 4.4 l-3.6 4.4 M1569.4 737 l3.6 4.4 l-3.6 4.4" fill="none" stroke="#3a3a3a" stroke-width="1.6"/>
<text x="1374.4" y="749.4" font-size="23" fill="#333" text-anchor="start" font-weight="normal" textLength="52.4" lengthAdjust="spacingAndGlyphs" stroke="#333" stroke-width="0.35">Back</text>
<text x="1485.6" y="749.6" font-size="23" fill="#333" text-anchor="start" font-weight="normal" textLength="54.2" lengthAdjust="spacingAndGlyphs" stroke="#333" stroke-width="0.35">Next</text>
</svg>
</body></html>
